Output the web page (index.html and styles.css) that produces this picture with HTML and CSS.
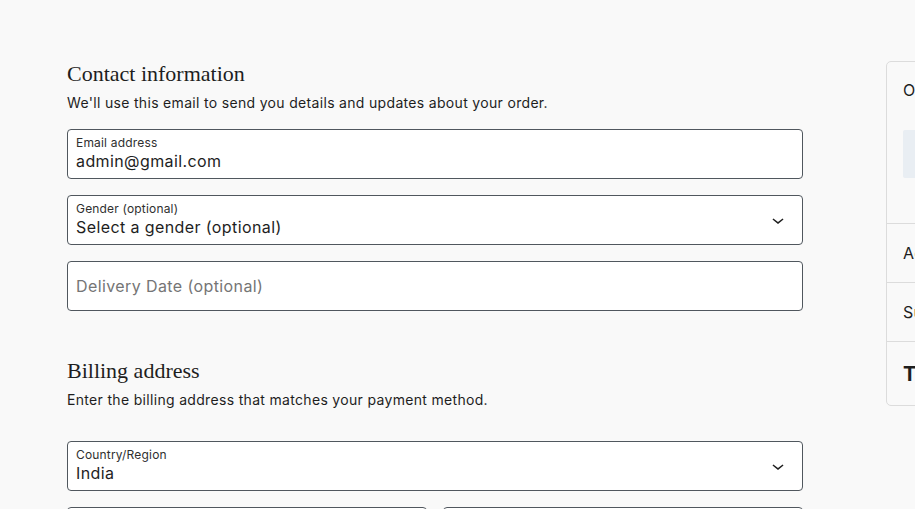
FILE: index.html
```html
<!DOCTYPE html>
<html lang="en">
<head>
<meta charset="utf-8">
<title>Checkout</title>
<link rel="stylesheet" href="styles.css">
</head>
<body>
<div class="page">
  <main class="main">
    <section class="block">
      <h2 class="title">Contact information</h2>
      <p class="desc">We'll use this email to send you details and updates about your order.</p>
      <div class="fields">
        <div class="field">
          <span class="label">Email address</span>
          <span class="value">admin@gmail.com</span>
        </div>
        <div class="field select">
          <span class="label">Gender (optional)</span>
          <span class="value">Select a gender (optional)</span>
          <svg class="chev" viewBox="0 0 24 24" width="24" height="24"><path d="M17.5 11.6L12 16l-5.5-4.4.9-1.2L12 14l4.6-3.6.9 1.2z"/></svg>
        </div>
        <div class="field empty">
          <span class="placeholder">Delivery Date (optional)</span>
        </div>
      </div>
    </section>
    <section class="block billing">
      <h2 class="title">Billing address</h2>
      <p class="desc">Enter the billing address that matches your payment method.</p>
      <div class="fields country">
        <div class="field select">
          <span class="label">Country/Region</span>
          <span class="value">India</span>
          <svg class="chev" viewBox="0 0 24 24" width="24" height="24"><path d="M17.5 11.6L12 16l-5.5-4.4.9-1.2L12 14l4.6-3.6.9 1.2z"/></svg>
        </div>
        <div class="row">
          <div class="field"></div>
          <div class="field"></div>
        </div>
      </div>
    </section>
  </main>
  <aside class="summary">
    <div class="sum-top">
      <div class="sum-title">Order summary</div>
      <div class="sum-item"></div>
    </div>
    <div class="sum-row">Add coupons</div>
    <div class="sum-row">Subtotal</div>
    <div class="sum-row total">Total</div>
  </aside>
</div>
</body>
</html>
```

FILE: styles.css
```css
html, body {
  margin: 0;
  padding: 0;
}
body {
  background: #f9f9f9;
  color: #1e1e1e;
  font-family: Inter, "Noto Sans", sans-serif;
  letter-spacing: 0.02em;
  overflow: hidden;
  width: 915px;
  height: 509px;
}
.page {
  display: flex;
  gap: 83px;
  padding: 61px 0 0 67px;
  width: 1400px;
  align-items: flex-start;
}
.main {
  width: 736px;
  flex-shrink: 0;
}
.title {
  margin: 0;
  font-family: "Liberation Serif", "DejaVu Serif", serif;
  font-weight: 400;
  font-size: 22px;
  line-height: 26px;
  letter-spacing: 0;
  color: #1e1e1e;
}
.desc {
  margin: 5px 0 0;
  font-size: 14px;
  line-height: 21px;
  color: #1e1e1e;
}
.fields {
  margin-top: 16px;
  display: flex;
  flex-direction: column;
  gap: 16px;
}
.billing {
  margin-top: 47px;
}
.fields.country {
  margin-top: 31px;
}
.field {
  position: relative;
  box-sizing: border-box;
  height: 50px;
  border: 1px solid #50575e;
  border-radius: 4px;
  background: #fff;
  padding: 5px 8px 0;
  display: flex;
  flex-direction: column;
}
.label {
  font-size: 12px;
  line-height: 16px;
  letter-spacing: 0.015em;
  color: #2f2f2f;
}
.value {
  font-size: 16px;
  line-height: 21px;
  letter-spacing: 0.025em;
  color: #1e1e1e;
}
.field.empty {
  padding: 0 8px;
  justify-content: center;
}
.placeholder {
  font-size: 16px;
  line-height: 24px;
  letter-spacing: 0.025em;
  color: #757575;
}
.chev {
  position: absolute;
  right: 12px;
  top: 12px;
  fill: #1e1e1e;
}
.row {
  display: flex;
  gap: 16px;
}
.row .field {
  flex: 1;
}
.summary {
  width: 320px;
  flex-shrink: 0;
  box-sizing: border-box;
  border: 1px solid #dcdcdc;
  border-radius: 5px;
  background: #f9f9f9;
}
.sum-top {
  padding: 16px 16px 45px;
}
.sum-title {
  font-size: 16px;
  line-height: 24px;
  color: #1e1e1e;
}
.sum-item {
  margin-top: 28px;
  height: 48px;
  background: #e9eef3;
  border-radius: 2px;
}
.sum-row {
  box-sizing: border-box;
  height: 59px;
  border-top: 1px solid #dcdcdc;
  padding: 0 16px;
  display: flex;
  align-items: center;
  font-size: 16px;
  color: #1e1e1e;
}
.sum-row.total {
  height: 64px;
  font-size: 20px;
  font-weight: 700;
}
```
